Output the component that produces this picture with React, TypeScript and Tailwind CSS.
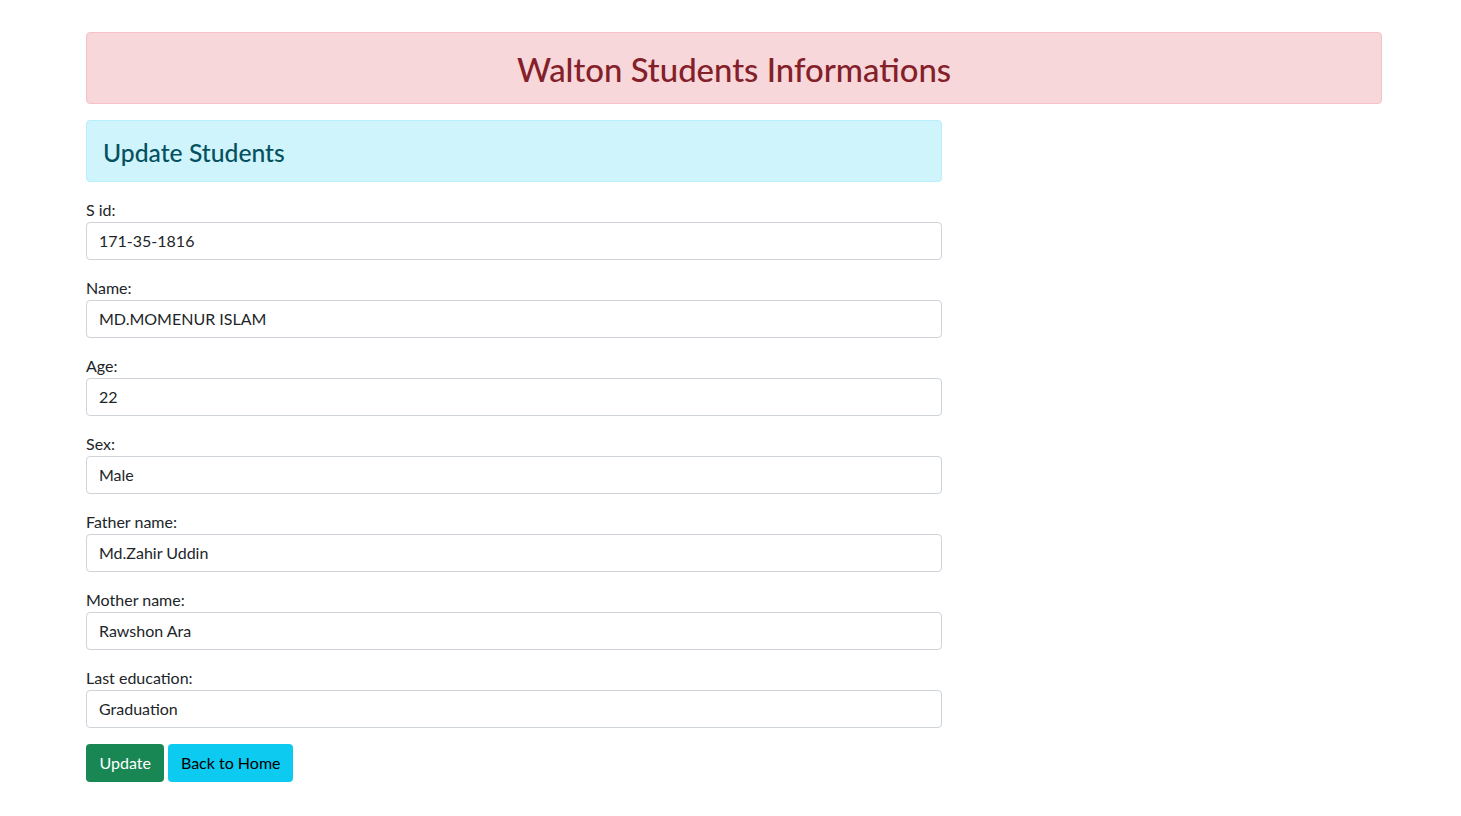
import React from "react";

const fields: [string, string][] = [
  ["S id:", "171-35-1816"],
  ["Name:", "MD.MOMENUR ISLAM"],
  ["Age:", "22"],
  ["Sex:", "Male"],
  ["Father name:", "Md.Zahir Uddin"],
  ["Mother name:", "Rawshon Ara"],
  ["Last education:", "Graduation"],
];

export default function App() {
  return (
    <div
      className="min-h-[816px] bg-white text-[#212529] text-[16px] leading-[24px]"
      style={{ fontFamily: "Lato, 'Noto Sans', sans-serif" }}
    >
      <div className="ml-[86px] w-[1296px] pt-[32px]">
        <div className="border border-[#f5c2c7] bg-[#f8d7da] rounded-[4px] px-[16px] pt-[18px] pb-[14px] mb-[16px] text-center">
          <h2 className="text-[32.9px] leading-[38px] font-medium text-[#842029]">Walton Students Informations</h2>
        </div>
        <div className="w-[856px]">
          <div className="border border-[#b6effb] bg-[#cff4fc] rounded-[4px] px-[16px] pt-[18px] pb-[14px] mb-[16px]">
            <h4 className="text-[24.7px] leading-[28px] font-medium text-[#055160]">Update Students</h4>
          </div>
          <form>
            {fields.map(([label, value]) => (
              <div key={label} className="mb-[16px]">
                <label className="block">{label}</label>
                <input
                  readOnly
                  value={value}
                  className="block w-full h-[38px] border border-[#ced4da] rounded-[4px] px-[12px] pb-[1px] text-[#212529] outline-none"
                />
              </div>
            ))}
            <div className="flex gap-[4px]">
              <button type="button" className="h-[38px] px-[13.5px] rounded-[4px] bg-[#198754] text-white">Update</button>
              <button type="button" className="h-[38px] px-[12.5px] rounded-[4px] bg-[#0dcaf0] text-black">Back to Home</button>
            </div>
          </form>
        </div>
      </div>
    </div>
  );
}
